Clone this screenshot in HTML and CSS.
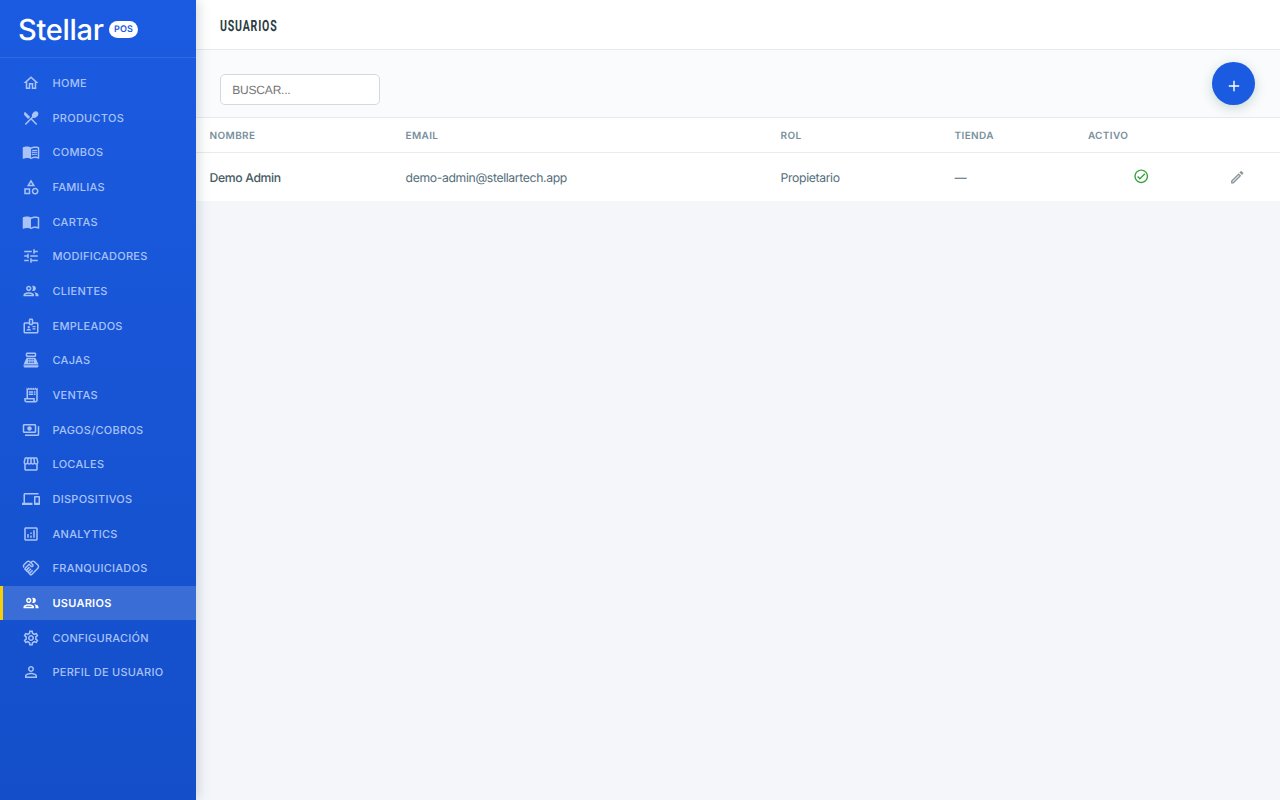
FILE: index.html
```html
<!DOCTYPE html>
<html lang="es">
<head>
    <meta charset="UTF-8">
    <meta name="viewport" content="width=device-width, initial-scale=1.0">
    <title>Usuarios - Stellar POS</title>
    <link rel="stylesheet" href="styles.css">
</head>
<body>
    <aside class="sidebar">
        <div class="brand">
            <span class="brand-name">Stellar</span>
            <span class="brand-tag">POS</span>
        </div>
        <nav class="menu">
            <a class="menu-item"><svg class="icon" viewBox="0 0 24 24"><path d="M12 5.69l5 4.5V18h-2v-6H9v6H7v-7.81l5-4.5M12 3L2 12h3v8h6v-6h2v6h6v-8h3L12 3z"/></svg><span>HOME</span></a>
            <a class="menu-item"><svg class="icon" viewBox="0 0 24 24"><path d="M8.1 13.34l2.83-2.83L3.91 3.5c-1.56 1.56-1.56 4.09 0 5.66l4.19 4.18zm6.78-1.81c1.53.71 3.68.21 5.27-1.38 1.91-1.91 2.28-4.65.81-6.12-1.46-1.46-4.2-1.1-6.12.81-1.59 1.59-2.09 3.74-1.38 5.27L3.7 19.87l1.41 1.41L12 14.41l6.88 6.88 1.41-1.41L13.41 13l1.47-1.47z"/></svg><span>PRODUCTOS</span></a>
            <a class="menu-item"><svg class="icon" viewBox="0 0 24 24"><path d="M21 5c-1.11-.35-2.33-.5-3.5-.5-1.95 0-4.05.4-5.5 1.5-1.45-1.1-3.55-1.5-5.5-1.5S2.45 4.9 1 6v14.65c0 .25.25.5.5.5.1 0 .15-.05.25-.05C3.1 20.45 5.05 20 6.5 20c1.95 0 4.05.4 5.5 1.5 1.35-.85 3.8-1.5 5.5-1.5 1.65 0 3.35.3 4.75 1.05.1.05.15.05.25.05.25 0 .5-.25.5-.5V6c-.6-.45-1.25-.75-2-1zm0 13.5c-1.1-.35-2.3-.5-3.5-.5-1.7 0-4.15.65-5.5 1.5V8c1.35-.85 3.8-1.5 5.5-1.5 1.2 0 2.4.15 3.5.5v11.5z"/><path d="M17.5 10.5c.88 0 1.73.09 2.5.26V9.24c-.79-.15-1.64-.24-2.5-.24-1.7 0-3.24.29-4.5.83v1.66c1.13-.64 2.7-.99 4.5-.99zM13 12.49v1.66c1.13-.64 2.7-.99 4.5-.99.88 0 1.73.09 2.5.26V11.9c-.79-.15-1.64-.24-2.5-.24-1.7 0-3.24.3-4.5.83zM17.5 14.33c-1.7 0-3.24.29-4.5.83v1.66c1.13-.64 2.7-.99 4.5-.99.88 0 1.73.09 2.5.26v-1.52c-.79-.16-1.64-.24-2.5-.24z"/></svg><span>COMBOS</span></a>
            <a class="menu-item"><svg class="icon" viewBox="0 0 24 24"><path d="M12 2l-5.5 9h11L12 2zm0 3.84L13.93 9h-3.87L12 5.84zM17.5 13c-2.49 0-4.5 2.01-4.5 4.5s2.01 4.5 4.5 4.5 4.5-2.01 4.5-4.5-2.01-4.5-4.5-4.5zm0 7c-1.38 0-2.5-1.12-2.5-2.5s1.12-2.5 2.5-2.5 2.5 1.12 2.5 2.5-1.12 2.5-2.5 2.5zM3 21.5h8v-8H3v8zm2-6h4v4H5v-4z"/></svg><span>FAMILIAS</span></a>
            <a class="menu-item"><svg class="icon" viewBox="0 0 24 24"><path d="M21 5c-1.11-.35-2.33-.5-3.5-.5-1.95 0-4.05.4-5.5 1.5-1.45-1.1-3.55-1.5-5.5-1.5S2.45 4.9 1 6v14.65c0 .25.25.5.5.5.1 0 .15-.05.25-.05C3.1 20.45 5.05 20 6.5 20c1.95 0 4.05.4 5.5 1.5 1.35-.85 3.8-1.5 5.5-1.5 1.65 0 3.35.3 4.75 1.05.1.05.15.05.25.05.25 0 .5-.25.5-.5V6c-.6-.45-1.25-.75-2-1zm0 13.5c-1.1-.35-2.3-.5-3.5-.5-1.7 0-4.15.65-5.5 1.5V8c1.35-.85 3.8-1.5 5.5-1.5 1.2 0 2.4.15 3.5.5v11.5z"/></svg><span>CARTAS</span></a>
            <a class="menu-item"><svg class="icon" viewBox="0 0 24 24"><path d="M3 17v2h6v-2H3zM3 5v2h10V5H3zm10 16v-2h8v-2h-8v-2h-2v6h2zM7 9v2H3v2h4v2h2V9H7zm14 4v-2H11v2h10zm-6-4h2V7h4V5h-4V3h-2v6z"/></svg><span>MODIFICADORES</span></a>
            <a class="menu-item"><svg class="icon" viewBox="0 0 24 24"><path d="M9 13.75c-2.34 0-7 1.17-7 3.5V19h14v-1.75c0-2.33-4.66-3.5-7-3.5zM4.34 17c.84-.58 2.87-1.25 4.66-1.25s3.82.67 4.66 1.25H4.34zM9 12c1.93 0 3.5-1.57 3.5-3.5S10.93 5 9 5 5.5 6.57 5.5 8.5 7.07 12 9 12zm0-5c.83 0 1.5.67 1.5 1.5S9.83 10 9 10s-1.5-.67-1.5-1.5S8.17 7 9 7zm7.04 6.81c1.16.84 1.96 1.96 1.96 3.44V19h4v-1.75c0-2.02-3.5-3.17-5.96-3.44zM15 12c1.93 0 3.5-1.57 3.5-3.5S16.93 5 15 5c-.54 0-1.04.13-1.5.35.63.89 1 1.98 1 3.15s-.37 2.26-1 3.15c.46.22.96.35 1.5.35z"/></svg><span>CLIENTES</span></a>
            <a class="menu-item"><svg class="icon" viewBox="0 0 24 24"><path d="M20 7h-5V4c0-1.1-.9-2-2-2h-2c-1.1 0-2 .9-2 2v3H4c-1.1 0-2 .9-2 2v11c0 1.1.9 2 2 2h16c1.1 0 2-.9 2-2V9c0-1.1-.9-2-2-2zm-9-3h2v5h-2V4zm9 16H4V9h5c0 1.1.9 2 2 2h2c1.1 0 2-.9 2-2h5v11z"/><circle cx="9" cy="13.5" r="1.5"/><path d="M11.08 16.18C10.44 15.9 9.74 15.75 9 15.75s-1.44.15-2.08.43c-.55.24-.92.78-.92 1.39V18h6v-.43c0-.61-.37-1.15-.92-1.39zM14 15h4v1.5h-4zM14 12h4v1.5h-4z"/></svg><span>EMPLEADOS</span></a>
            <a class="menu-item"><svg class="icon" viewBox="0 0 24 24"><path fill-rule="evenodd" d="M17 2H7c-1.1 0-2 .9-2 2v2c0 1.1.9 2 2 2h10c1.1 0 2-.9 2-2V4c0-1.1-.9-2-2-2zm0 4H7V4h10v2zM20 22H4c-1.1 0-2-.9-2-2v-1h20v1c0 1.1-.9 2-2 2zM18.53 10.19C18.21 9.47 17.49 9 16.7 9H7.3c-.79 0-1.51.47-1.83 1.19L2 18h20l-3.47-7.81zM8 11h2v1H8zM8 13h2v1H8zM8 15h2v1H8zM11 11h2v1h-2zM11 13h2v1h-2zM11 15h2v1h-2zM14 11h2v1h-2zM14 13h2v1h-2zM14 15h2v1h-2z"/></svg><span>CAJAS</span></a>
            <a class="menu-item"><svg class="icon" viewBox="0 0 24 24"><path d="M19.5 3.5L18 2l-1.5 1.5L15 2l-1.5 1.5L12 2l-1.5 1.5L9 2 7.5 3.5 6 2v14H3v3c0 1.66 1.34 3 3 3h12c1.66 0 3-1.34 3-3V2l-1.5 1.5zM15 20H6c-.55 0-1-.45-1-1v-1h10v2zm4-1c0 .55-.45 1-1 1s-1-.45-1-1v-3H8V5h11v14z"/><path d="M9 7h6v2H9zM16 7h2v2h-2zM9 10h6v2H9zM16 10h2v2h-2z"/></svg><span>VENTAS</span></a>
            <a class="menu-item"><svg class="icon" viewBox="0 0 24 24"><path d="M19 14V6c0-1.1-.9-2-2-2H3c-1.1 0-2 .9-2 2v8c0 1.1.9 2 2 2h14c1.1 0 2-.9 2-2zm-2 0H3V6h14v8zm-7-7c-1.66 0-3 1.34-3 3s1.34 3 3 3 3-1.34 3-3-1.34-3-3-3zm13 0v11c0 1.1-.9 2-2 2H4v-2h17V7h2z"/></svg><span>PAGOS/COBROS</span></a>
            <a class="menu-item"><svg class="icon" viewBox="0 0 24 24"><path d="M21.9 8.89l-1.05-4.37c-.22-.9-1-1.52-1.91-1.52H5.05c-.9 0-1.69.63-1.9 1.52L2.1 8.89c-.24 1.02-.02 2.06.62 2.88.08.11.19.19.28.29V19c0 1.1.9 2 2 2h14c1.1 0 2-.9 2-2v-6.94c.09-.09.2-.18.28-.28.64-.82.87-1.87.62-2.89zm-2.99-3.9l1.05 4.37c.1.42.01.84-.25 1.17-.14.18-.44.47-.94.47-.61 0-1.14-.49-1.21-1.14L16.98 5l1.93-.01zM13 5h1.96l.54 4.52c.05.39-.07.78-.33 1.07-.22.26-.54.41-.95.41-.67 0-1.22-.59-1.22-1.31V5zM8.49 9.52L9.04 5H11v4.69c0 .72-.55 1.31-1.29 1.31-.34 0-.65-.15-.89-.41-.25-.29-.37-.68-.33-1.07zm-4.45-.16L5.05 5h1.97l-.58 4.86c-.08.65-.6 1.14-1.21 1.14-.49 0-.8-.29-.93-.47-.27-.32-.36-.75-.26-1.17zM5 19v-6.03c.08.01.15.03.23.03.87 0 1.66-.36 2.24-.95.6.6 1.4.95 2.31.95.87 0 1.65-.36 2.23-.93.59.57 1.39.93 2.29.93.84 0 1.64-.35 2.24-.95.58.59 1.37.95 2.24.95.08 0 .15-.02.23-.03V19H5z"/></svg><span>LOCALES</span></a>
            <a class="menu-item"><svg class="icon" viewBox="0 0 24 24"><path d="M4 6h18V4H4c-1.1 0-2 .9-2 2v11H0v3h14v-3H4V6zm19 2h-6c-.55 0-1 .45-1 1v10c0 .55.45 1 1 1h6c.55 0 1-.45 1-1V9c0-.55-.45-1-1-1zm-1 9h-4v-7h4v7z"/></svg><span>DISPOSITIVOS</span></a>
            <a class="menu-item"><svg class="icon" viewBox="0 0 24 24"><path d="M19 3H5c-1.1 0-2 .9-2 2v14c0 1.1.9 2 2 2h14c1.1 0 2-.9 2-2V5c0-1.1-.9-2-2-2zm0 16H5V5h14v14z"/><path d="M7 12h2v5H7zM15 7h2v10h-2zM11 14h2v3h-2zM11 10h2v2h-2z"/></svg><span>ANALYTICS</span></a>
            <a class="menu-item"><svg class="icon" viewBox="0 0 24 24"><path d="M12.22 19.85c-.18.18-.5.21-.71 0-.18-.18-.21-.5 0-.71l3.39-3.39-1.41-1.41-3.39 3.39c-.19.2-.51.19-.71 0-.21-.21-.18-.53 0-.71l3.39-3.39-1.41-1.41-3.39 3.39c-.18.18-.5.21-.71 0-.19-.19-.19-.51 0-.71l3.39-3.39-1.42-1.41-3.39 3.39c-.18.18-.5.21-.71 0-.19-.2-.19-.51 0-.71L9.52 8.4l1.87 1.86c.95.95 2.59.94 3.54 0 .98-.98.98-2.56 0-3.54l-1.86-1.86.28-.28c.78-.78 2.05-.78 2.83 0l4.24 4.24c.78.78.78 2.05 0 2.83l-8.2 8.2zm9.61-6.78c1.56-1.56 1.56-4.09 0-5.66l-4.24-4.24c-1.56-1.56-4.09-1.56-5.66 0l-.28.28-.28-.28c-1.56-1.56-4.09-1.56-5.66 0L2.17 6.71c-1.42 1.42-1.55 3.63-.4 5.19l1.45-1.45c-.39-.75-.26-1.7.37-2.33l3.54-3.54c.78-.78 2.05-.78 2.83 0l3.56 3.56c.18.18.21.5 0 .71-.21.21-.53.18-.71 0L9.52 5.57l-5.8 5.79c-.98.97-.98 2.56 0 3.54.39.39.89.63 1.42.7.07.52.3 1.02.7 1.42.4.4.9.63 1.42.7.07.52.3 1.02.7 1.42.4.4.9.63 1.42.7.07.54.31 1.03.7 1.42.47.47 1.1.73 1.77.73s1.3-.26 1.77-.73l8.21-8.19z"/></svg><span>FRANQUICIADOS</span></a>
            <a class="menu-item active"><svg class="icon" viewBox="0 0 24 24"><path d="M9 13.75c-2.34 0-7 1.17-7 3.5V19h14v-1.75c0-2.33-4.66-3.5-7-3.5zM4.34 17c.84-.58 2.87-1.25 4.66-1.25s3.82.67 4.66 1.25H4.34zM9 12c1.93 0 3.5-1.57 3.5-3.5S10.93 5 9 5 5.5 6.57 5.5 8.5 7.07 12 9 12zm0-5c.83 0 1.5.67 1.5 1.5S9.83 10 9 10s-1.5-.67-1.5-1.5S8.17 7 9 7zm7.04 6.81c1.16.84 1.96 1.96 1.96 3.44V19h4v-1.75c0-2.02-3.5-3.17-5.96-3.44zM15 12c1.93 0 3.5-1.57 3.5-3.5S16.93 5 15 5c-.54 0-1.04.13-1.5.35.63.89 1 1.98 1 3.15s-.37 2.26-1 3.15c.46.22.96.35 1.5.35z"/></svg><span>USUARIOS</span></a>
            <a class="menu-item"><svg class="icon" viewBox="0 0 24 24"><path d="M19.43 12.98c.04-.32.07-.64.07-.98s-.03-.66-.07-.98l2.11-1.65c.19-.15.24-.42.12-.64l-2-3.46c-.09-.16-.26-.25-.44-.25-.06 0-.12.01-.17.03l-2.49 1c-.52-.4-1.08-.73-1.69-.98l-.38-2.65C14.46 2.18 14.25 2 14 2h-4c-.25 0-.46.18-.49.42l-.38 2.65c-.61.25-1.17.59-1.69.98l-2.49-1c-.06-.02-.12-.03-.18-.03-.17 0-.34.09-.43.25l-2 3.46c-.13.22-.07.49.12.64l2.11 1.65c-.04.32-.07.65-.07.98s.03.66.07.98l-2.11 1.65c-.19.15-.24.42-.12.64l2 3.46c.09.16.26.25.44.25.06 0 .12-.01.17-.03l2.49-1c.52.4 1.08.73 1.69.98l.38 2.65c.03.24.24.42.49.42h4c.25 0 .46-.18.49-.42l.38-2.65c.61-.25 1.17-.59 1.69-.98l2.49 1c.06.02.12.03.18.03.17 0 .34-.09.43-.25l2-3.46c.12-.22.07-.49-.12-.64l-2.11-1.65zm-1.98-1.71c.04.31.05.52.05.73 0 .21-.02.43-.05.73l-.14 1.13.89.7 1.08.84-.7 1.21-1.27-.51-1.04-.42-.9.68c-.43.32-.84.56-1.25.73l-1.06.43-.16 1.13-.2 1.35h-1.4l-.19-1.35-.16-1.13-1.06-.43c-.43-.18-.83-.41-1.23-.71l-.91-.7-1.06.43-1.27.51-.7-1.21 1.08-.84.89-.7-.14-1.13c-.03-.31-.05-.54-.05-.74s.02-.43.05-.73l.14-1.13-.89-.7-1.08-.84.7-1.21 1.27.51 1.04.42.9-.68c.43-.32.84-.56 1.25-.73l1.06-.43.16-1.13.2-1.35h1.39l.19 1.35.16 1.13 1.06.43c.43.18.83.41 1.23.71l.91.7 1.06-.43 1.27-.51.7 1.21-1.07.85-.89.7.14 1.13zM12 8c-2.21 0-4 1.79-4 4s1.79 4 4 4 4-1.79 4-4-1.79-4-4-4zm0 6c-1.1 0-2-.9-2-2s.9-2 2-2 2 .9 2 2-.9 2-2 2z"/></svg><span>CONFIGURACIÓN</span></a>
            <a class="menu-item"><svg class="icon" viewBox="0 0 24 24"><path d="M12 5.9c1.16 0 2.1.94 2.1 2.1s-.94 2.1-2.1 2.1S9.9 9.16 9.9 8s.94-2.1 2.1-2.1m0 9c2.97 0 6.1 1.46 6.1 2.1v1.1H5.9V17c0-.64 3.13-2.1 6.1-2.1M12 4C9.79 4 8 5.79 8 8s1.79 4 4 4 4-1.79 4-4-1.79-4-4-4zm0 9c-2.67 0-8 1.34-8 4v3h16v-3c0-2.66-5.33-4-8-4z"/></svg><span>PERFIL DE USUARIO</span></a>
        </nav>
    </aside>

    <main class="content">
        <header class="topbar">
            <h1 class="title">USUARIOS</h1>
        </header>
        <div class="toolbar">
            <input class="search" type="text" placeholder="BUSCAR...">
            <button class="add-button" aria-label="Agregar">
                <svg class="add-icon" viewBox="0 0 12 12"><path d="M6 .8v10.4M.8 6h10.4"/></svg>
            </button>
        </div>
        <table class="users">
            <colgroup>
                <col class="col-name">
                <col class="col-email">
                <col class="col-role">
                <col class="col-store">
                <col class="col-active">
                <col>
            </colgroup>
            <thead>
                <tr>
                    <th>NOMBRE</th>
                    <th>EMAIL</th>
                    <th>ROL</th>
                    <th>TIENDA</th>
                    <th>ACTIVO</th>
                    <th></th>
                </tr>
            </thead>
            <tbody>
                <tr>
                    <td class="name">Demo Admin</td>
                    <td>demo-admin@stellartech.app</td>
                    <td>Propietario</td>
                    <td>—</td>
                    <td class="status"><svg class="icon-check" viewBox="0 0 24 24"><path d="M16.59 7.58L10 14.17l-2.59-2.58L6 13l4 4 8-8zM12 2C6.48 2 2 6.48 2 12s4.48 10 10 10 10-4.48 10-10S17.52 2 12 2zm0 18c-4.42 0-8-3.58-8-8s3.58-8 8-8 8 3.58 8 8-3.58 8-8 8z"/></svg></td>
                    <td class="actions"><svg class="icon-edit" viewBox="0 0 24 24"><path d="M14.06 9.02l.92.92L5.92 19H5v-.92l9.06-9.06M17.66 3c-.25 0-.51.1-.7.29l-1.83 1.83 3.75 3.75 1.83-1.83c.39-.39.39-1.02 0-1.41l-2.34-2.34c-.2-.2-.45-.29-.71-.29zm-3.6 3.19L3 17.25V21h3.75L17.81 9.94l-3.75-3.75z"/></svg></td>
                </tr>
            </tbody>
        </table>
    </main>
</body>
</html>
```

FILE: styles.css
```css
* {
    box-sizing: border-box;
}
body {
    margin: 0;
    height: 100vh;
    display: flex;
    overflow: hidden;
    font-family: Inter, "Liberation Sans", sans-serif;
    text-rendering: geometricPrecision;
    background-color: #f4f6fa;
}

/* Menú lateral */
.sidebar {
    width: 195.6px;
    flex-shrink: 0;
    background: linear-gradient(180deg, #1b5be1 0%, #144fc9 100%);
    box-shadow: 2px 0 12px rgba(40, 70, 70, 0.2);
    z-index: 1;
}
.brand {
    height: 58px;
    display: flex;
    align-items: center;
    padding: 1px 0 0 18px;
    border-bottom: 1px solid rgba(255, 255, 255, 0.1);
    color: #fff;
}
.brand-name {
    width: 91px;
    padding-top: 1px;
    font-size: 29px;
    font-weight: 500;
    letter-spacing: -0.3px;
    line-height: 1;
}
.brand-tag {
    width: 29px;
    height: 17px;
    border-radius: 9px;
    background-color: #fff;
    color: #1b5be1;
    font-size: 9px;
    font-weight: 600;
    letter-spacing: 0.2px;
    line-height: 17.5px;
    text-align: center;
}
.menu {
    display: flex;
    flex-direction: column;
    gap: 1px;
    padding-top: 8.2px;
}
.menu-item {
    height: 33.67px;
    display: flex;
    align-items: center;
    gap: 12.5px;
    padding-left: 19px;
    border-left: 3px solid transparent;
    color: #a9c3f8;
    font-size: 11px;
    font-weight: 450;
    letter-spacing: 0.26px;
}
.menu-item.active {
    background-color: rgba(255, 255, 255, 0.16);
    border-left-color: #f5cf0a;
    color: #fff;
    font-weight: 600;
}
.icon {
    width: 18px;
    height: 18px;
    fill: currentColor;
}

/* Contenido */
.content {
    flex: 1;
    min-width: 0;
}
.topbar {
    height: 50px;
    padding: 17px 25px 0 24.7px;
    background-color: #fff;
    border-bottom: 1px solid #e6ebee;
}
.title {
    margin: 0;
    width: 100px;
    font-family: Roboto, sans-serif;
    font-size: 15.5px;
    font-weight: 700;
    line-height: 18px;
    letter-spacing: 1.2px;
    color: #2b3d42;
    transform: scaleX(0.68);
    transform-origin: left;
}
.toolbar {
    height: 68px;
    display: flex;
    justify-content: space-between;
    padding: 12.3px 25px 0 24.7px;
    background-color: #fafbfd;
    border-bottom: 1px solid #e6ebee;
}
.search {
    width: 160px;
    height: 31px;
    margin-top: 11.7px;
    padding: 1px 11px 0;
    border: 1px solid #d3dadd;
    border-radius: 5px;
    background-color: #fff;
    font-family: "Liberation Sans", Arial, sans-serif;
    font-size: 12px;
    letter-spacing: -0.2px;
    text-rendering: geometricPrecision;
}
.search::placeholder {
    color: #757575;
}
.add-button {
    width: 42.6px;
    height: 42.6px;
    display: flex;
    align-items: center;
    justify-content: center;
    padding: 4.3px 0 0;
    border: none;
    border-radius: 50%;
    background-color: #1b5be1;
    box-shadow: 0 3px 12px rgba(40, 110, 90, 0.25);
}
.add-icon {
    width: 12px;
    height: 12px;
    stroke: #fff;
    stroke-width: 1.4;
}

/* Tabla de usuarios */
.users {
    width: 100%;
    table-layout: fixed;
    border-collapse: separate;
    border-spacing: 0;
    background-color: #fff;
}
.col-name {
    width: 196px;
}
.col-email {
    width: 375px;
}
.col-role {
    width: 174px;
}
.col-store {
    width: 133.3px;
}
.col-active {
    width: 134px;
}
.users th {
    height: 35px;
    padding: 1px 14px 0;
    border-bottom: 1px solid #e6ebee;
    color: #78909c;
    font-size: 10px;
    font-weight: 600;
    letter-spacing: 0.35px;
    text-align: left;
}
.users td {
    height: 48.3px;
    padding: 1px 14px 0;
    color: #546e7a;
    font-size: 12.2px;
    letter-spacing: -0.35px;
}
.users .name {
    color: #455a64;
    font-weight: 500;
}
.users .status {
    padding: 0 14px 2px;
    text-align: center;
}
.icon-check {
    display: inline-block;
    width: 16.5px;
    height: 16.5px;
    vertical-align: middle;
    fill: #38a140;
}
.icon-edit {
    display: block;
    width: 16.5px;
    height: 16.5px;
    margin: 0 auto;
    fill: #90979b;
}
.users .actions {
    padding: 0 14px 0 0;
}
```
